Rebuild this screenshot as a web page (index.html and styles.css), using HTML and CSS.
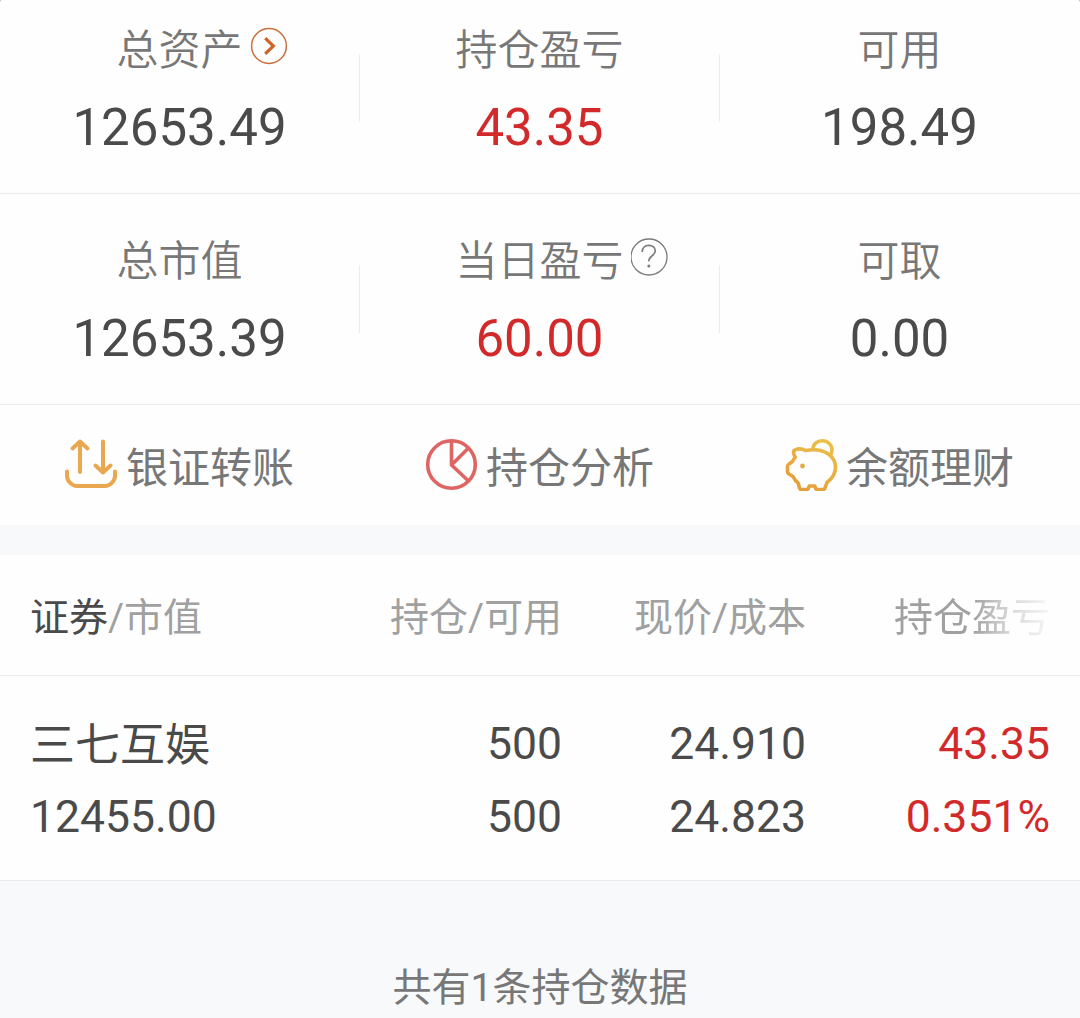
FILE: index.html
```html
<!DOCTYPE html>
<html lang="zh-CN">

<head>
    <meta charset="UTF-8">
    <meta name="viewport" content="width=device-width, initial-scale=1.0">
    <title>持仓</title>
    <link rel="stylesheet" href="styles.css">
</head>

<body>

    <section class="summary">
        <div class="summary-row">
            <div class="cell">
                <div class="label">总资产
                    <svg class="badge" viewBox="0 0 38 38" fill="none">
                        <circle cx="19" cy="19" r="17.4" stroke="#c8703c" stroke-width="1.5" />
                        <path d="M15.2 11.2l8.2 7.8-8.2 7.8" stroke="#cf6328" stroke-width="3.2" />
                    </svg>
                </div>
                <div class="value">12653.49</div>
            </div>
            <div class="cell">
                <div class="label">持仓盈亏</div>
                <div class="value red">43.35</div>
            </div>
            <div class="cell">
                <div class="label">可用</div>
                <div class="value">198.49</div>
            </div>
        </div>
        <div class="summary-row second">
            <div class="cell">
                <div class="label">总市值</div>
                <div class="value">12653.39</div>
            </div>
            <div class="cell">
                <div class="label">当日盈亏
                    <svg class="badge" viewBox="0 0 38 38" fill="none" stroke="#7a7a7a">
                        <circle cx="18" cy="19" r="18" stroke-width="1.3" />
                        <path d="M11.2 14c0-4.300 2.800-6.700 6.600-6.700s6.500 2.300 6.500 5.700c0 4.500-6.500 5-6.500 10.300" stroke-width="1.700" />
                        <circle cx="17.800" cy="28" r="1.500" fill="#7a7a7a" stroke="none" />
                    </svg>
                </div>
                <div class="value red">60.00</div>
            </div>
            <div class="cell">
                <div class="label">可取</div>
                <div class="value">0.00</div>
            </div>
        </div>
    </section>

    <nav class="actions">
        <a class="action">
            <svg class="action-icon" viewBox="0 0 54 54" fill="none" stroke="#e9a850" stroke-width="4" stroke-linecap="round" stroke-linejoin="round">
                <path d="M3 34.500v4.500c0 5 5 10 10 10h28c5 0 10-5 10-10v-4.500" />
                <path d="M16 35V4.500M8.500 11.500L16 4.500l7.500 7" />
                <path d="M39 4.500V35M31.500 28.500L39 35.500l7.500-7" />
            </svg>
            <span>银证转账</span>
        </a>
        <a class="action">
            <svg class="action-icon" viewBox="0 0 54 54" fill="none" stroke="#df6464" stroke-width="3.600">
                <circle cx="27.500" cy="27.500" r="23.800" />
                <path d="M27.500 4v24l16.500 15.500M27.500 28l16-16" />
            </svg>
            <span>持仓分析</span>
        </a>
        <a class="action">
            <svg class="action-icon" viewBox="-.5 -1 54 54" fill="none" stroke="url(#gold)" stroke-width="3.600" stroke-linejoin="round">
                <defs>
                    <linearGradient id="gold" gradientUnits="userSpaceOnUse" x1="40" y1="2" x2="12" y2="54">
                        <stop offset="0" stop-color="#ebc046" />
                        <stop offset="1" stop-color="#e59a3a" />
                    </linearGradient>
                </defs>
                <path d="M10.500 12c3-1.500 7.500-1.200 10.500 .500 3-.500 8-1 12-.500 11 1.500 18 8.500 18 17 0 7-4 12-8.500 15.500L40.500 50c-.300 1-1 1.500-2 1.500h-5.500c-1 0-1.500-.500-2-1.300l-.700-2.200h-5.500l-.800 2.200c-.300.800-1 1.300-2 1.300h-5c-1 0-1.700-.500-2-1.500L13.700 45c-2.500-1.500-4-4-5.200-6.500L4.500 36c-1-.700-1.500-1.500-1.500-2.500v-5c0-1 .500-2 1.500-2.500l3.500-2.500c.500-1.500 1.500-3 2.800-4.200-1.300-1.800-1.800-3.800-1.800-5.300 0-.900.600-1.600 1.500-2z" />
                <path d="M28.500 11c0-5 4-8.200 9-8.200 6 0 10 4.200 10 9 0 2-.500 4-1.500 5.200" />
                <circle cx="18" cy="28" r="2.400" fill="#e5ab48" stroke="none" />
            </svg>
            <span>余额理财</span>
        </a>
    </nav>

    <section class="holdings">
        <div class="grid head">
            <div><span class="dark">证券</span>/市值</div>
            <div class="num">持仓/可用</div>
            <div class="num">现价/成本</div>
            <div class="num fade">持仓盈亏</div>
        </div>
        <div class="grid stock">
            <div class="name">三七互娱</div>
            <div class="num">500</div>
            <div class="num">24.910</div>
            <div class="num red">43.35</div>
            <div>12455.00</div>
            <div class="num">500</div>
            <div class="num">24.823</div>
            <div class="num red">0.351%</div>
        </div>
    </section>

    <footer class="footer">共有1条持仓数据</footer>

</body>

</html>
```

FILE: styles.css
```css
* {
    box-sizing: border-box;
}

html {
    background-color: #777;
}

body {
    margin: 0;
    height: 1018px;
    overflow: hidden;
    border-radius: 1px 1px 0 0 / 5px 5px 0 0;
    background-color: #f8f9fb;
    color: #4a4a4a;
    font-family: Roboto, "Noto Sans CJK SC", sans-serif;
}

.summary,
.actions,
.holdings {
    background-color: #fefefe;
}

.summary {
    border-radius: 1px 1px 0 0 / 5px 5px 0 0;
}

.summary-row {
    display: grid;
    grid-template-columns: repeat(3, 1fr);
    height: 194px;
    padding-top: 21px;
    border-bottom: 1px solid #ebebeb;
}

.summary-row.second {
    height: 211px;
    padding-top: 38px;
}

.cell {
    display: flex;
    flex-direction: column;
    align-items: center;
    background: linear-gradient(#ececec, #ececec) no-repeat right 33px / 1px 68px;
}

.cell:last-child {
    background: none;
}

.label {
    position: relative;
    height: 60px;
    padding-right: 1px;
    font-size: 42px;
    line-height: 60px;
    font-weight: 350;
    color: #777;
}

/* hangs off the label so the text itself stays centred */
.badge {
    position: absolute;
    left: calc(100% + 6px);
    top: 6px;
    width: 38px;
    height: 38px;
}

.value {
    margin-top: 17px;
    padding-right: 1px;
    font-size: 51px;
    line-height: 60px;
}

.red {
    color: #d22a2a;
}

.actions {
    display: grid;
    grid-template-columns: repeat(3, 1fr);
    height: 120px;
    font-size: 42px;
    color: #777;
}

.action {
    display: flex;
    align-items: center;
    justify-content: center;
    gap: 8px;
    padding: 0 2px 2px 0;
}

.action-icon {
    width: 54px;
    height: 54px;
}

.holdings {
    margin-top: 30px;
}

.grid {
    display: grid;
    grid-template-columns: 288px 244px 244px 244px;
    padding: 0 30px;
    border-bottom: 1px solid #ebebeb;
}

.head {
    height: 121px;
    padding-bottom: 2px;
    align-items: center;
    font-size: 39px;
    color: #a0a0a0;
}

.dark {
    color: #4a4a4a;
}

.num {
    text-align: right;
}

.fade {
    -webkit-mask-image: linear-gradient(to right, #000 68%, rgba(0, 0, 0, 0.4) 84%, transparent 104%);
    mask-image: linear-gradient(to right, #000 68%, rgba(0, 0, 0, 0.4) 84%, transparent 104%);
}

.stock {
    height: 205px;
    padding-top: 32px;
    grid-auto-rows: 73px;
    font-size: 44.5px;
    line-height: 73px;
}

.name {
    padding-top: 1px;
    font-size: 45px;
}

.footer {
    padding-top: 78px;
    font-size: 39px;
    line-height: 58px;
    text-align: center;
    color: #777;
}
```
